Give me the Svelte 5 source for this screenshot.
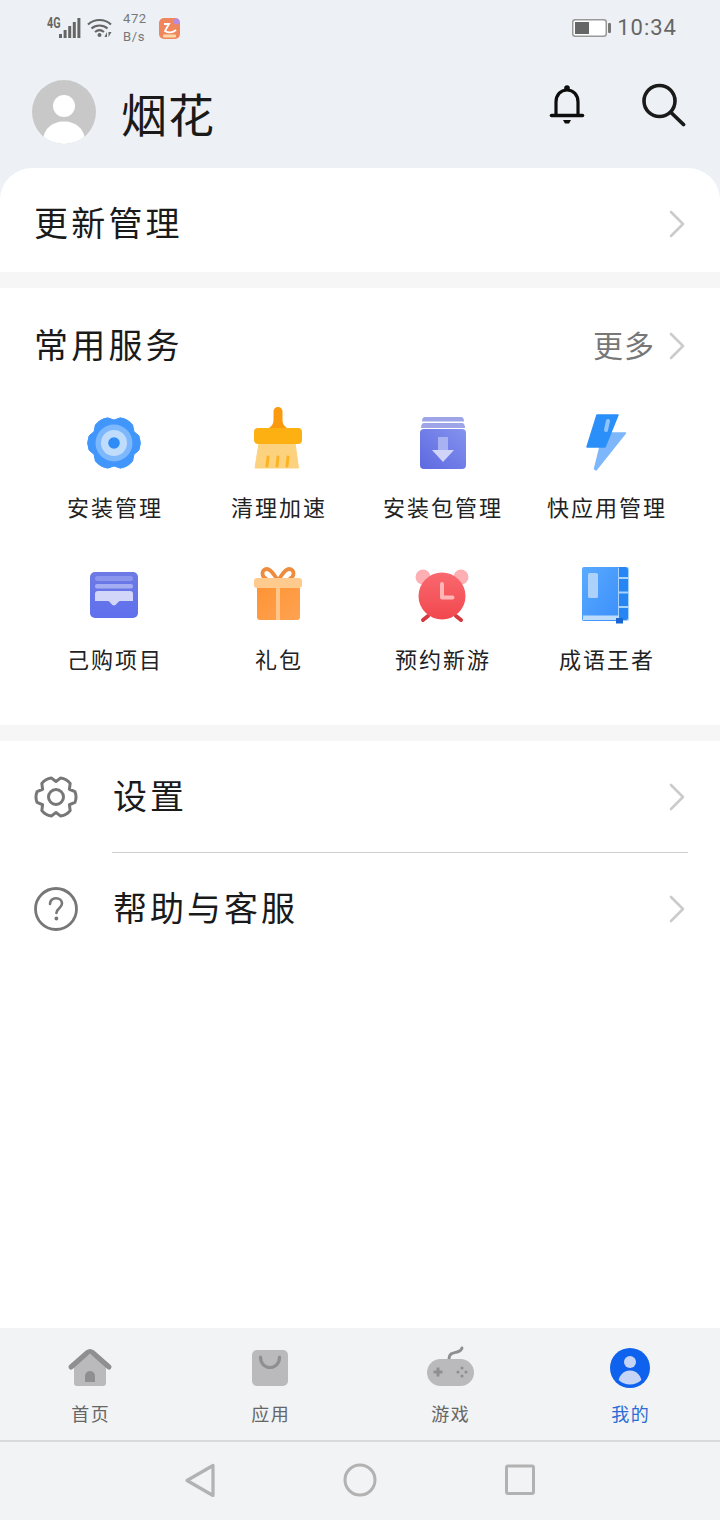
<script>
  function gear(cx, cy, R, r, n = 6, off = 0) {
    const p = (a, d) => {
      const t = ((a + off) * Math.PI) / 180;
      return `${(cx + d * Math.cos(t)).toFixed(2)} ${(cy + d * Math.sin(t)).toFixed(2)}`;
    };
    const s = 360 / n;
    let d = '';
    for (let i = 0; i < n; i++) {
      const a = i * s;
      d += (i === 0 ? 'M' : 'L') + p(a - 16, R * 0.96);
      d += 'Q' + p(a, R * 1.03) + ' ' + p(a + 16, R * 0.96);
      d += 'L' + p(a + 30, r);
    }
    return d + 'Z';
  }
  const row1 = ['安装管理', '清理加速', '安装包管理', '快应用管理'];
  const row2 = ['己购项目', '礼包', '预约新游', '成语王者'];
</script>

{#snippet chevron()}
  <svg class="chev" width="16" height="28" viewBox="0 0 16 28"><path d="M2 2l12 12L2 26" fill="none" stroke="#cbcbcb" stroke-width="2.6" stroke-linecap="round" stroke-linejoin="round"/></svg>
{/snippet}

<div class="page">
  <header class="head">
    <div class="status">
      <span class="net">4G</span>
      <svg class="sig" width="22" height="20" viewBox="0 0 22 20"><g fill="#666"><rect x="0" y="16" width="3" height="4"/><rect x="4.6" y="12" width="3" height="8"/><rect x="9.2" y="8" width="3" height="12"/><rect x="13.8" y="4" width="3" height="16"/><rect x="18.4" y="0" width="3" height="20"/></g></svg>
      <svg class="wifi" width="26" height="20" viewBox="0 0 26 20"><g fill="none" stroke="#666" stroke-width="2.2"><path d="M1 6.5C7.500.5 17.500.5 24 6.500"/><path d="M4.500 10.500C9 6.500 16 6.500 20.500 10.500"/><path d="M8 14c3-2.400 6-2.400 9 0"/></g><circle cx="12.500" cy="17" r="2" fill="#666"/><path d="M20 19v-5l-2.500 5zM21.500 14v5l3-5z" fill="#666"/></svg>
      <span class="speed">472<br />B/s</span>
      <svg class="uc" width="21" height="21" viewBox="0 0 21 21"><rect width="21" height="21" rx="5" fill="#f0875c"/><path d="M5 6h5l-4 7c3 2 8 2 11-1" fill="none" stroke="#fff" stroke-width="1.800"/><rect x="4" y="16.500" width="13" height="3" rx="1" fill="#fbd9a8"/><circle cx="17.500" cy="3.500" r="3" fill="#b78be0"/></svg>
      <span class="grow"></span>
      <svg class="batt" width="39" height="18" viewBox="0 0 39 18"><rect x=".75" y=".75" width="33.500" height="16.500" rx="2.500" fill="#fff" stroke="#999" stroke-width="1.500"/><rect x="3" y="3" width="14" height="12" fill="#666"/><rect x="36" y="4" width="3" height="10" rx="1" fill="#777"/></svg>
      <span class="time">10:34</span>
    </div>
    <div class="user">
      <svg class="avatar" width="64" height="64" viewBox="0 0 64 64"><defs><clipPath id="av"><circle cx="32" cy="32" r="32"/></clipPath></defs><circle cx="32" cy="32" r="32" fill="#c8c8c8"/><g clip-path="url(#av)"><circle cx="32" cy="26" r="11" fill="#fff"/><path d="M11 62c0-13 9-20.500 21-20.500S53 49 53 62l-21 3z" fill="#fff"/></g></svg>
      <h1>烟花</h1>
      <span class="grow"></span>
      <svg class="bell" width="36" height="42" viewBox="0 0 36 42"><path d="M7 30V18C7 11 11.500 6 18 6s11 5 11 12v12" fill="none" stroke="#0d0d0d" stroke-width="3.200"/><path d="M2.500 31.500h31" stroke="#0d0d0d" stroke-width="3.600" stroke-linecap="round"/><circle cx="18" cy="4" r="2.800" fill="#0d0d0d"/><path d="M14 36h8l-2 3.500h-4z" fill="#0d0d0d"/></svg>
      <svg class="search" width="46" height="44" viewBox="0 0 46 44"><circle cx="18.500" cy="18" r="15.500" fill="none" stroke="#1a1a1a" stroke-width="3.600"/><path d="M30 29.500L42.500 41.500" stroke="#1a1a1a" stroke-width="3.800" stroke-linecap="round"/></svg>
    </div>
  </header>

  <main class="main">
    <section class="update">
      <span class="big">更新管理</span>
      {@render chevron()}
    </section>
    <div class="sep"></div>

    <section class="svc">
      <div class="svc-head">
        <span class="big">常用服务</span>
        <span class="more">更多</span>
        {@render chevron()}
      </div>
      <div class="grid">
        <div class="cell">
          <svg class="ic" viewBox="0 0 80 80"><path d={gear(40, 40, 27, 23)} fill="#4096fb" stroke="#4096fb" stroke-width="1" stroke-linejoin="round"/><circle cx="40" cy="40" r="18.500" fill="#7db8fd"/><circle cx="40" cy="40" r="13" fill="#c0dcfd"/><circle cx="40" cy="40" r="5.800" fill="#2f8bf6"/></svg>
          <span class="lab">{row1[0]}</span>
        </div>
        <div class="cell">
          <svg class="ic" viewBox="0 0 80 80"><path d="M21 40h36l3.500 25H17z" fill="#fdd27f" stroke="#fdd27f" stroke-linejoin="round"/><g stroke="#fbb321" stroke-width="3" stroke-linecap="round"><path d="M30 54l-1 9"/><path d="M40 54l-1 9"/><path d="M50 54l-1 9"/></g><path d="M35.500 8.500a4.500 4.500 0 0 1 9 0V17c0 5 3 7 6 9H29.500c3-2 6-4 6-9z" fill="#fb9a0e"/><rect x="16" y="25" width="48" height="16" rx="4" fill="#fdb012"/></svg>
          <span class="lab">{row1[1]}</span>
        </div>
        <div class="cell">
          <svg class="ic" viewBox="0 0 80 80"><defs><linearGradient id="pk" x1="1" y1="0" x2="0" y2="1"><stop offset="0" stop-color="#8492ef"/><stop offset="1" stop-color="#5d69e0"/></linearGradient></defs><path d="M20 18.500c0-3 1-4.500 3-4.500h36c2 0 3 1.500 3 4.500z" fill="#9da5e8"/><path d="M19 25c0-3 1-5 3-5h38c2 0 3 2 3 5z" fill="#9da5e8"/><rect x="18" y="26" width="46" height="40" rx="4" fill="url(#pk)"/><rect x="36" y="34" width="10" height="13" fill="#a8b2f2"/><path d="M30 47h22L41 59z" fill="#cfd4f8"/></svg>
          <span class="lab">{row1[2]}</span>
        </div>
        <div class="cell">
          <svg class="ic" viewBox="0 0 80 80"><path d="M45 30h14.500L30 67l-1.500-1 5.500-22z" fill="#7db6fb" stroke="#7db6fb" stroke-width="1.500" stroke-linejoin="round"/><path d="M31 12h21l-13 32H21z" fill="#2b8ffa" stroke="#2b8ffa" stroke-width="1.500" stroke-linejoin="round"/><path d="M42 18l-2 9" stroke="#8fc5fb" stroke-width="4" stroke-linecap="round"/></svg>
          <span class="lab">{row1[3]}</span>
        </div>
        <div class="cell">
          <svg class="ic" viewBox="0 0 80 80"><defs><linearGradient id="wl" x1="0" y1="0" x2="0" y2="1"><stop offset="0" stop-color="#6e7ae4"/><stop offset="1" stop-color="#5f70ee"/></linearGradient></defs><rect x="16" y="17" width="48" height="46" rx="5" fill="url(#wl)"/><rect x="21" y="21" width="38" height="5" rx="2.500" fill="#8b97ec"/><rect x="21" y="29" width="38" height="4.500" rx="2" fill="#a5aef2"/><path d="M21 39c0-2 1-3 3-3h32c2 0 3 1 3 3v7H46c-2 0-3.500 4.500-6 4.500S36 46 34 46H21z" fill="#d2d7f9"/></svg>
          <span class="lab">{row2[0]}</span>
        </div>
        <div class="cell">
          <svg class="ic" viewBox="0 0 80 80"><defs><linearGradient id="gf" x1="0" y1="0" x2="1" y2="1"><stop offset="0" stop-color="#fe9435"/><stop offset="1" stop-color="#ffa252"/></linearGradient></defs><g fill="none" stroke="#ee8b3d" stroke-width="3.800"><path d="M39 24c-3-4-6-10-10-10-6 0-6 8 0 10"/><path d="M41 24c3-4 6-10 10-10 6 0 6 8 0 10"/></g><path d="M19 33h43v29a3 3 0 0 1-3 3H22a3 3 0 0 1-3-3z" fill="url(#gf)"/><rect x="16" y="23" width="48" height="10" rx="3" fill="#ffca8d"/><rect x="38" y="33" width="4" height="32" fill="#ffc68b"/></svg>
          <span class="lab">{row2[1]}</span>
        </div>
        <div class="cell">
          <svg class="ic" viewBox="0 0 80 80"><defs><linearGradient id="ck" x1="0" y1="0" x2="0" y2="1"><stop offset="0" stop-color="#f8696f"/><stop offset="1" stop-color="#f2474e"/></linearGradient></defs><circle cx="21" cy="22" r="7.500" fill="#fdafb3"/><circle cx="59" cy="22" r="7.500" fill="#fdafb3"/><path d="M21 65l5-4M59 65l-5-4" stroke="#d5383e" stroke-width="4" stroke-linecap="round"/><circle cx="40" cy="41" r="23.500" fill="url(#ck)"/><path d="M40 29v13.500h10.500" fill="none" stroke="#ffb6b6" stroke-width="4" stroke-linecap="round" stroke-linejoin="round"/></svg>
          <span class="lab">{row2[2]}</span>
        </div>
        <div class="cell">
          <svg class="ic" viewBox="0 0 80 80"><defs><linearGradient id="bk" x1="0" y1="0" x2="1" y2="1"><stop offset="0" stop-color="#5aaaff"/><stop offset="1" stop-color="#3a8ffb"/></linearGradient></defs><path d="M16 14a2 2 0 0 1 2-2h35v54H18a2 2 0 0 1-2-2z" fill="url(#bk)"/><rect x="52" y="12" width="11" height="54" rx="2" fill="#a9d3fb"/><path d="M53 12h6a3 3 0 0 1 3 3v7h-9z" fill="#2586f4"/><rect x="53" y="24" width="9" height="12.500" fill="#2586f4"/><rect x="53" y="38.500" width="9" height="12.500" fill="#2586f4"/><path d="M53 53h9v10a2 2 0 0 1-2 2h-7z" fill="#2586f4"/><rect x="17" y="60.500" width="36" height="4.500" fill="#bddcfb"/><rect x="50" y="63" width="7" height="5.500" fill="#1a66d0"/><rect x="22" y="18" width="10" height="25" rx="1.500" fill="#acd2fc"/></svg>
          <span class="lab">{row2[3]}</span>
        </div>
      </div>
    </section>
    <div class="sep"></div>

    <section class="list">
      <div class="row">
        <svg class="ric" width="48" height="48" viewBox="0 0 48 48"><path d={gear(24, 24, 20.500, 15.500)} fill="none" stroke="#777" stroke-width="3" stroke-linejoin="round"/><circle cx="24" cy="24" r="7.500" fill="none" stroke="#777" stroke-width="3"/></svg>
        <span class="big">设置</span>
        <span class="grow"></span>
        {@render chevron()}
      </div>
      <div class="div"></div>
      <div class="row">
        <svg class="ric" width="48" height="48" viewBox="0 0 48 48"><circle cx="24" cy="24" r="20.500" fill="none" stroke="#777" stroke-width="2.800"/><path d="M18 19c0-3.600 2.600-5.800 6-5.800s6 2.200 6 5.400c0 4.400-5.600 4.800-5.600 9.400" fill="none" stroke="#777" stroke-width="2.600" stroke-linecap="round"/><circle cx="24.400" cy="33.500" r="1.900" fill="#777"/></svg>
        <span class="big">帮助与客服</span>
        <span class="grow"></span>
        {@render chevron()}
      </div>
    </section>
  </main>

  <nav class="tabs">
    <div class="tab">
      <svg width="60" height="48" viewBox="0 0 60 48"><path d="M14 21l16-11 16 11v18a3 3 0 0 1-3 3H17a3 3 0 0 1-3-3z" fill="#bababc"/><path d="M11 23L27.500 8.500a4 4 0 0 1 5 0L49 23" fill="none" stroke="#8f8f91" stroke-width="5" stroke-linecap="round" stroke-linejoin="round"/><path d="M25 38v-6a5 5 0 0 1 10 0v6z" fill="#8f8f91"/></svg>
      <span>首页</span>
    </div>
    <div class="tab">
      <svg width="60" height="48" viewBox="0 0 60 48"><rect x="12" y="6" width="36" height="36" rx="5" fill="#bababc"/><path d="M20.500 13c0 14 19 14 19 0" fill="none" stroke="#8f8f91" stroke-width="3.200" stroke-linecap="round"/></svg>
      <span>应用</span>
    </div>
    <div class="tab">
      <svg width="60" height="48" viewBox="0 0 60 48"><path d="M29 15c0-6 4-6 8-7 3-.6 4.500-2 5-4" fill="none" stroke="#8f8f91" stroke-width="3" stroke-linecap="round"/><rect x="7" y="15" width="47" height="27" rx="13.500" fill="#bababc"/><path d="M18 23.500v9M13.500 28h9" stroke="#8f8f91" stroke-width="3"/><g fill="#8f8f91"><circle cx="42" cy="24" r="1.600"/><circle cx="42" cy="32" r="1.600"/><circle cx="38" cy="28" r="1.600"/><circle cx="46" cy="28" r="1.600"/></g></svg>
      <span>游戏</span>
    </div>
    <div class="tab on">
      <svg width="60" height="48" viewBox="0 0 60 48"><defs><clipPath id="me"><circle cx="30" cy="24" r="16.500"/></clipPath></defs><circle cx="30" cy="24" r="20" fill="#0f62ee"/><circle cx="30" cy="18" r="6" fill="#c6d5f5"/><path d="M18 41c0-9 5-14.500 12-14.500S42 32 42 41z" fill="#c6d5f5" clip-path="url(#me)"/></svg>
      <span>我的</span>
    </div>
  </nav>
  <footer class="sysnav">
    <svg width="40" height="40" viewBox="0 0 40 40"><path d="M33 5.500v30L7 20.500z" fill="none" stroke="#b2b2b2" stroke-width="3.200" stroke-linejoin="round"/></svg>
    <svg width="40" height="40" viewBox="0 0 40 40"><circle cx="20" cy="20" r="15" fill="none" stroke="#b2b2b2" stroke-width="3"/></svg>
    <svg width="40" height="40" viewBox="0 0 40 40"><rect x="6.500" y="6" width="27" height="27.500" rx="1.500" fill="none" stroke="#b2b2b2" stroke-width="3"/></svg>
  </footer>
</div>

<style>
  :global(body) { margin: 0; background: #fff; }
  .page {
    width: 720px;
    height: 1520px;
    display: flex;
    flex-direction: column;
    font-family: "Noto Sans CJK SC", "Noto Sans", sans-serif;
    color: #1a1a1a;
    overflow: hidden;
    background: #edf1f5;
  }
  svg { display: block; flex: none; }
  .grow { flex: 1; }
  .head { height: 168px; flex: none; }
  .status {
    display: flex;
    align-items: center;
    height: 56px;
    padding-left: 47px;
    padding-right: 44px;
    color: #666;
  }
  .net {
    font: 700 15px/12px "Roboto", sans-serif;
    width: 12px;
    margin-top: -11px;
    transform: scaleX(0.72);
    transform-origin: left center;
  }
  .wifi { margin-left: 6px; }
  .speed { font: 400 13px/18px "Roboto", sans-serif; letter-spacing: .6px; color: #777; margin-left: 10px; width: 36px; }
  .batt { position: relative; left: 1px; }
  .time { font: 400 22px/26px "Roboto", sans-serif; letter-spacing: 1px; color: #666; margin-left: 6px; position: relative; left: 1px; }
  .user {
    display: flex;
    align-items: flex-start;
    height: 64px;
    padding: 24px 33px 0 32px;
  }
  h1 {
    margin: 0 0 0 25px;
    font-size: 46px;
    line-height: 58px;
    font-weight: 400;
    letter-spacing: 1px;
    color: #1a1a1a;
    padding-top: 3px;
  }
  .search { margin-left: 56px; margin-top: 3px; }
  .bell { margin-top: 4px; }
  .main { flex: 1; background: #fff; border-radius: 32px 32px 0 0; overflow: hidden; }
  .update {
    height: 96px;
    padding: 8px 35px 0 34px;
    display: flex;
    align-items: center;
    justify-content: space-between;
  }
  .big { font-size: 34px; line-height: 44px; letter-spacing: 3.2px; margin-bottom: 4px; color: #1a1a1a; }
  .sep { height: 16px; background: #f6f6f6; }
  .svc { padding-bottom: 50px; }
  .svc-head {
    display: flex;
    align-items: center;
    padding: 36px 35px 0 34px;
    height: 44px;
    margin-bottom: 35px;
  }
  .svc-head .big { flex: 1; }
  .more { font-size: 30px; line-height: 44px; letter-spacing: 1px; margin-bottom: 4px; color: #777; margin-right: 14px; }
  .grid {
    display: grid;
    grid-template-columns: repeat(4, 164px);
    row-gap: 32px;
    padding-left: 32px;
  }
  .cell { display: flex; flex-direction: column; align-items: center; }
  .ic { width: 80px; height: 80px; }
  .lab { font-size: 22px; line-height: 30px; letter-spacing: 2px; padding-left: 2px; margin-top: 8px; margin-bottom: 2px; color: #222; white-space: nowrap; }
  .row {
    height: 111px;
    display: flex;
    align-items: center;
    padding: 0 35px 0 32px;
  }
  .row .big { margin-left: 33px; letter-spacing: 3px; }
  .div { height: 1px; margin: 0 32px 0 112px; background: #cfcfcf; }
  .tabs {
    height: 112px;
    flex: none;
    display: grid;
    grid-template-columns: repeat(4, 180px);
    background: #f2f3f5;
    border-bottom: 2px solid #d9dadc;
  }
  .tab {
    display: flex;
    flex-direction: column;
    align-items: center;
    padding-top: 16px;
    font-size: 18px;
    line-height: 28px;
    letter-spacing: 1.5px;
    color: #666;
  }
  .tab span { margin-top: 7px; padding-left: 1.5px; }
  .tab.on { color: #2a6cd6; }
  .sysnav {
    height: 78px;
    padding-bottom: 2px;
    box-sizing: border-box;
    flex: none;
    display: flex;
    align-items: center;
    justify-content: center;
    gap: 120px;
    background: #f2f3f5;
  }
</style>
